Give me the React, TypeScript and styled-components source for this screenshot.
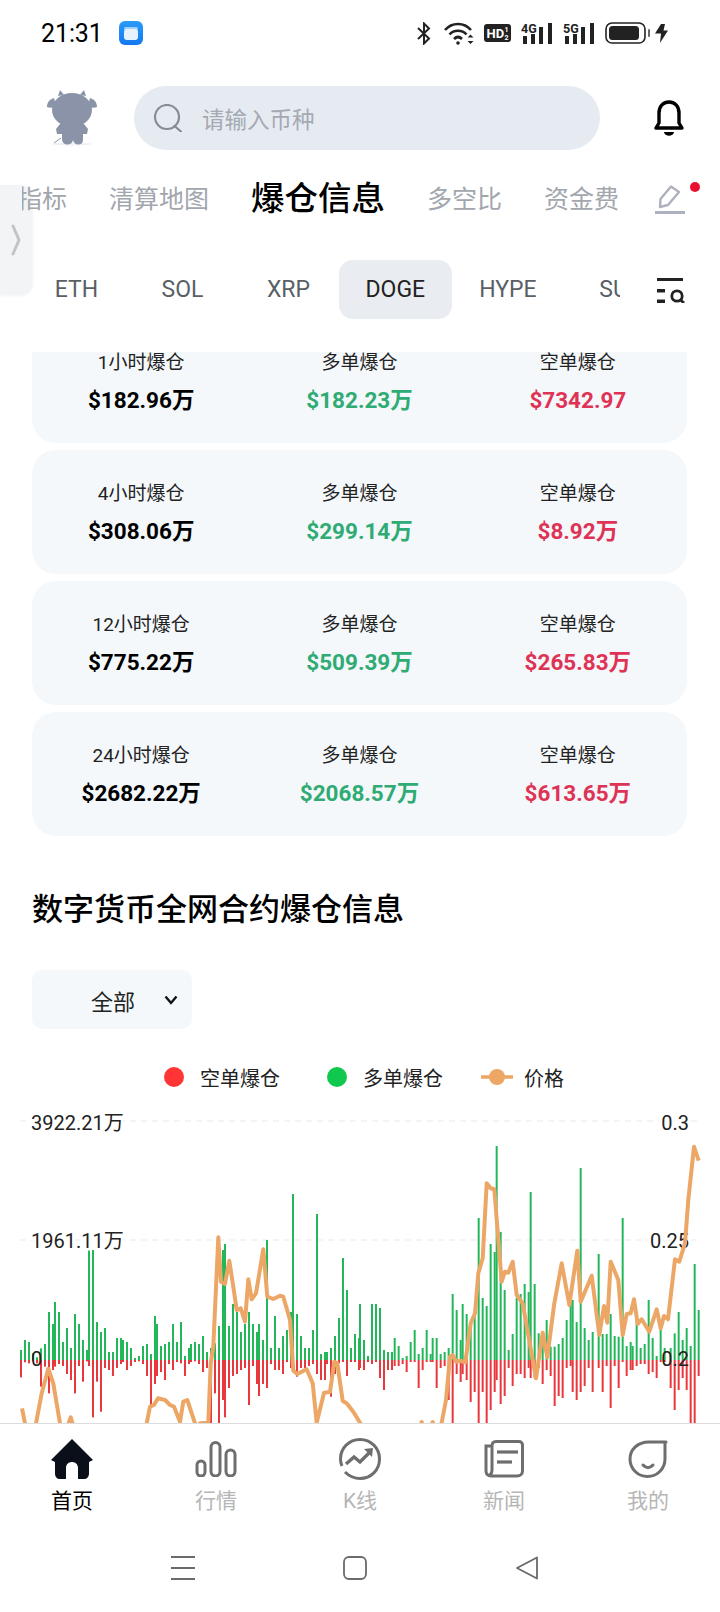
import React from "react";
import styled, { createGlobalStyle } from "styled-components";

const GlobalStyle = createGlobalStyle`
    html, body {
        margin: 0;
        padding: 0;
        background: #fff;
        font-family: Roboto, "Noto Sans CJK SC", sans-serif;
    }
`;

const Screen = styled.div`
    position: relative;
    width: 720px;
    height: 1612px;
    display: flex;
    flex-direction: column;
    overflow: hidden;
    background: #fff;
`;

const StatusBar = styled.div`
    height: 86px;
    flex-shrink: 0;
    display: flex;
    align-items: flex-start;
    padding: 21px 52px 0 41px;
    box-sizing: border-box;
`;

const Clock = styled.div`
    font-size: 25px;
    line-height: 24px;
    padding-top: 1px;
    color: #000;
    margin-right: 16px;
    letter-spacing: -0.1px;
`;

const StatusIcons = styled.div`
    margin-left: auto;
    display: flex;
    align-items: center;
    height: 24px;
    gap: 10px;
`;

const SearchRow = styled.div`
    height: 64px;
    flex-shrink: 0;
    display: flex;
    align-items: center;
    padding-left: 47px;
`;

const SearchBox = styled.div`
    width: 466px;
    height: 64px;
    margin-left: 37px;
    margin-right: 54px;
    border-radius: 32px;
    background: #e6ebf2;
    display: flex;
    align-items: center;
    padding-left: 20px;
    gap: 20px;
    box-sizing: border-box;
    font-size: 22.5px;
    color: #a4a9b2;
`;

const TopTabs = styled.div`
    height: 94px;
    flex-shrink: 0;
    display: flex;
    align-items: center;
    margin-bottom: 16px;
    padding-left: 22px;
    position: relative;
    z-index: 1;
`;

const TabClip = styled.div`
    width: 596px;
    overflow: hidden;
    display: flex;
    align-items: center;
    gap: 42px;
`;

const TabItem = styled.div<{ $active?: boolean; $first?: boolean }>`
    flex-shrink: 0;
    white-space: nowrap;
    font-size: ${(p) => (p.$active ? "33.5px" : "25px")};
    font-weight: ${(p) => (p.$active ? 500 : 400)};
    color: ${(p) => (p.$active ? "#000" : "#a2a6ad")};
    margin-left: ${(p) => (p.$first ? "-5px" : "0")};
    margin-top: ${(p) => (p.$active ? "-4px" : "0")};
`;

const EditButton = styled.div`
    position: relative;
    margin-left: 37px;
    margin-top: 5px;
    display: flex;
`;

const Dot = styled.span`
    position: absolute;
    top: -3px;
    right: -15px;
    width: 10px;
    height: 10px;
    border-radius: 50%;
    background: #e8102e;
`;

const CoinRow = styled.div`
    height: 59px;
    flex-shrink: 0;
    margin-bottom: 33px;
    display: flex;
    align-items: center;
    padding-left: 23.5px;
`;

const CoinClip = styled.div`
    width: 596.5px;
    height: 59px;
    overflow: hidden;
    display: flex;
`;

const CoinItem = styled.div<{ $active?: boolean }>`
    flex-shrink: 0;
    min-width: 106px;
    padding: 0 27px;
    margin-left: ${(p) => (p.$active ? "-3px" : "0")};
    box-sizing: border-box;
    display: flex;
    align-items: center;
    justify-content: center;
    font-size: 23px;
    border-radius: 14px;
    color: ${(p) => (p.$active ? "#222" : "#5a5f66")};
    background: ${(p) => (p.$active ? "#e9ecf0" : "transparent")};
`;

const FilterButton = styled.div`
    margin-left: 37px;
    margin-top: 2px;
    display: flex;
`;

const SideHandle = styled.div`
    position: absolute;
    left: 0;
    top: 185px;
    width: 32px;
    height: 110px;
    border-radius: 0 12px 12px 0;
    background: #f3f4f5;
    box-shadow: 1px 1px 3px rgba(0, 0, 0, 0.05);
    display: flex;
    align-items: center;
    padding-left: 11px;
    box-sizing: border-box;
`;

const Scroll = styled.div`
    flex: 1;
    min-height: 0;
    overflow: hidden;
`;

const CardList = styled.div`
    margin: -33px 33px 0 32px;
    display: flex;
    flex-direction: column;
    gap: 7px;
`;

const Card = styled.div`
    height: 124px;
    border-radius: 24px;
    background: #f4f8fb;
    display: grid;
    grid-template-columns: repeat(3, 1fr);
    padding-top: 32px;
    box-sizing: border-box;
`;

const Stat = styled.div`
    display: flex;
    flex-direction: column;
    align-items: center;
    gap: 10px;
`;

const StatLabel = styled.div`
    font-size: 19px;
    line-height: 24px;
    color: #222;
`;

const StatValue = styled.div<{ $tone?: "up" | "down" }>`
    font-size: 22.5px;
    line-height: 30px;
    font-weight: 700;
    color: ${(p) => (p.$tone === "up" ? "#2fab74" : p.$tone === "down" ? "#df3355" : "#000")};
`;

const SectionTitle = styled.h2`
    margin: 54px 0 40px 32px;
    font-size: 31px;
    line-height: 40px;
    font-weight: 500;
    color: #000;
`;

const Selector = styled.div`
    width: 160px;
    height: 59px;
    margin-left: 32px;
    border-radius: 10px;
    background: #f4f8fb;
    display: flex;
    align-items: center;
    padding-left: 59px;
    gap: 29px;
    box-sizing: border-box;
    font-size: 22px;
    color: #222;
`;

const Legend = styled.div`
    height: 24px;
    margin: 36px 0 11px 164px;
    display: flex;
    align-items: center;
    font-size: 20px;
    color: #222;
`;

const LegendDot = styled.span<{ $color: string }>`
    width: 20px;
    height: 20px;
    border-radius: 50%;
    background: ${(p) => p.$color};
    margin-right: 16px;
`;

const LegendText = styled.span`
    margin-right: 47px;
    white-space: nowrap;
`;

const LegendLine = styled.svg`
    margin-left: -9px;
    margin-right: 11px;
`;

const ChartSvg = styled.svg`
    display: block;
`;

const AxisText = styled.text<{ $halo?: boolean }>`
    font-size: 20px;
    fill: #222;
    paint-order: stroke;
    stroke: ${(p) => (p.$halo ? "#fff" : "none")};
    stroke-width: 5px;
`;

const TabBar = styled.div`
    height: 101px;
    flex-shrink: 0;
    border-top: 1px solid #dcdcdc;
    box-sizing: border-box;
    background: #fff;
    display: grid;
    grid-template-columns: repeat(5, 144px);
`;

const TabButton = styled.div<{ $active?: boolean }>`
    display: flex;
    flex-direction: column;
    align-items: center;
    padding-top: 14px;
    font-size: 21px;
    line-height: 26px;
    color: ${(p) => (p.$active ? "#000" : "#b6b6b6")};
`;

const TabIcon = styled.div`
    height: 42px;
    margin-bottom: 8px;
    display: flex;
    align-items: center;
`;

const NavBar = styled.div`
    height: 88px;
    flex-shrink: 0;
    display: flex;
    align-items: center;
    justify-content: center;
    padding-right: 10px;
    gap: 148px;
    background: #fff;
`;

// 3x coordinates read off the reference: [x, green top, red bottom], zero line at 780
const barsLeft: number[][] = [
    [63,750,832],[75,720,787],[87,726,790],[99,760,784],[111,772,790],[123,745,860],[135,732,800],[147,636,880],[159,672,810],[165,606,800],
    [177,636,792],[189,726,798],[201,684,822],[213,744,840],[225,642,880],[237,672,798],[249,720,845],[261,750,784],[267,450,798],[279,450,952],
    [291,666,845],[303,696,935],[315,684,804],[327,756,810],[339,756,828],[351,714,804],[363,714,792],[369,720,786],[381,726,810],[393,744,798],
    [405,774,786],[417,768,784],[429,738,792],[441,732,828],[453,762,915],[465,648,852],[471,672,828],[483,738,816],[495,732,840],[507,726,792],
    [519,672,810],[531,726,786],[543,666,790],[555,768,828],[567,744,792],[573,732,786],[585,726,784],[597,732,792],[609,708,816],[621,756,804],
    [633,744,990],[645,730,880],[657,678,990],[669,450,900],[675,432,952],[687,678,864],[699,612,828],[711,636,822],[723,696,810],[735,672,804],
    [747,636,915],[759,672,798],[771,696,852],[777,672,888],[789,720,852],[801,420,864],[813,744,792],[825,648,810],[837,744,810],[849,708,822],
    [861,690,786],[873,636,804],[879,282,804],[891,642,830],[903,708,804],[915,744,804],[927,744,798],[939,690,792],[951,342,822],[963,762,840],
    [975,756,840],[981,756,792],[993,744,890],[1005,708,822],[1017,654,790],[1029,474,786],[1041,570,828],[1053,744,786],[1065,702,786],[1077,714,810],
];

const barsRight: number[][] = [
    [0,612,804],[12,720,810],[24,768,786],[36,612,792],[48,612,786],[60,624,834],[72,750,870],[84,756,810],[96,756,810],[104,714,798],
    [116,738,798],[128,774,792],[140,768,816],[152,726,786],[164,690,786],[176,762,864],[188,744,810],[200,690,786],[212,762,786],[218,714,786],
    [230,714,864],[242,762,804],[254,756,798],[266,744,900],[278,582,990],[290,630,822],[302,720,846],[308,612,822],[320,642,840],[332,672,906],
    [344,640,876],[356,354,990],[368,594,876],[380,618,990],[392,432,930],[404,456,876],[410,138,840],[422,396,912],[434,570,888],[446,750,804],
    [458,702,858],[470,594,822],[482,582,822],[494,552,834],[506,576,804],[512,276,834],[524,552,834],[536,700,804],[548,696,852],[560,660,810],
    [572,740,828],[584,740,918],[596,732,888],[608,714,894],[620,660,804],[632,600,798],[638,600,876],[650,666,900],[662,204,876],[674,684,858],
    [686,720,804],[698,696,876],[716,462,804],[728,702,876],[740,702,798],[752,642,924],[764,708,798],[776,710,864],[788,354,786],[800,738,828],
    [812,726,810],[818,738,810],[830,640,798],[842,744,792],[854,732,792],[866,600,822],[878,714,816],[890,768,834],[902,690,786],[914,744,786],
    [932,744,864],[944,700,930],[956,636,870],[968,720,834],[980,684,870],[992,738,990],[1004,492,990],[1016,630,828],
];

const priceLeft: number[][] = [
    [66,925],[75,970],[90,1010],[108,970],[125,880],[145,806],[160,850],[180,970],[195,1010],[205,972],[212,952],[218,972],[240,1010],[420,1010],
    [440,970],[450,920],[462,915],[474,895],[495,900],[510,915],[522,920],[540,965],[550,905],[562,900],[585,970],[592,1000],[600,970],[625,968],
    [632,790],[640,740],[655,412],[663,545],[675,552],[688,482],[700,560],[710,630],[722,625],[735,665],[745,538],[755,598],[768,580],[790,448],
    [802,590],[820,597],[840,587],[850,590],[870,660],[880,812],[892,822],[920,808],[938,850],[950,968],[972,878],[990,876],[1003,785],[1012,790],
    [1028,903],[1040,910],[1060,935],[1080,968],[1100,1010],
];

const priceRight: number[][] = [
    [170,1010],[185,966],[195,1000],[205,1000],[218,966],[228,1000],[245,968],[258,900],[270,770],[278,765],[288,785],[300,782],[316,787],[332,670],
    [345,640],[355,520],[368,475],[380,250],[392,265],[403,268],[425,545],[435,515],[445,518],[458,485],[470,585],[488,610],[528,835],[548,698],
    [562,772],[583,610],[605,490],[628,615],[652,452],[662,605],[695,527],[718,705],[732,618],[742,668],[752,485],[775,540],[788,705],[800,642],
    [812,640],[822,598],[833,672],[845,658],[868,695],[890,628],[902,685],[912,648],[924,658],[945,478],[958,485],[975,430],[985,300],[1002,140],[1016,182],
];

const allBars = [...barsLeft, ...barsRight.map(([x, t, b]) => [x + 1080, t, b])];
const pricePoints = [...priceLeft, ...priceRight.map(([x, y]) => [x + 1080, y])]
    .map(([x, y]) => `${(x / 3).toFixed(1)},${(y / 3).toFixed(1)}`)
    .join(" ");

const stats = [
    { label: "1小时爆仓", total: "$182.96万", long: "$182.23万", short: "$7342.97" },
    { label: "4小时爆仓", total: "$308.06万", long: "$299.14万", short: "$8.92万" },
    { label: "12小时爆仓", total: "$775.22万", long: "$509.39万", short: "$265.83万" },
    { label: "24小时爆仓", total: "$2682.22万", long: "$2068.57万", short: "$613.65万" },
];

const AppDot = () => (
    <svg width="24" height="24" viewBox="0 0 24 24">
        <defs>
            <linearGradient id="appg" x1="0" y1="0" x2="0" y2="1">
                <stop offset="0" stopColor="#2a9bf8" />
                <stop offset="1" stopColor="#1478f0" />
            </linearGradient>
        </defs>
        <rect width="24" height="24" rx="6" fill="url(#appg)" />
        <rect x="5" y="6" width="14" height="3" rx="1.5" fill="#9fd0fb" />
        <rect x="5" y="8" width="14" height="11" rx="3" fill="#e6f3ff" />
    </svg>
);

const Bluetooth = () => (
    <svg width="14" height="23" viewBox="0 0 14 23" fill="none" stroke="#222" strokeWidth="2">
        <path d="M1 6 L12 16.5 L7 21.5 V1.5 L12 6.5 L1 17" />
    </svg>
);

const Wifi = () => (
    <svg width="30" height="23" viewBox="0 0 30 23" fill="none" stroke="#222" strokeWidth="2.6" style={{ marginLeft: 3 }}>
        <path d="M1 8 C8 0 20 0 27 8" />
        <path d="M5.5 12.5 C10 7.5 18 7.5 22.5 12.5" />
        <path d="M10 17 C12.5 14.5 15.5 14.5 18 17" />
        <circle cx="14" cy="21" r="1.8" fill="#222" stroke="none" />
        <path d="M23.5 15.5 L26.5 12.5 L29.5 15.5Z M23.5 19 H29.5 L26.5 22Z" fill="#222" stroke="none" />
    </svg>
);

const HdBadge = () => (
    <svg width="27" height="18" viewBox="0 0 27 18">
        <rect width="27" height="18" rx="3" fill="#222" />
        <text x="2.5" y="14" fontSize="13" fontWeight="700" fill="#fff" fontFamily="Roboto, sans-serif">HD</text>
        <text x="20.5" y="8" fontSize="7" fontWeight="700" fill="#fff" fontFamily="Roboto, sans-serif">1</text>
        <text x="20.5" y="16" fontSize="7" fontWeight="700" fill="#fff" fontFamily="Roboto, sans-serif">2</text>
    </svg>
);

const Signal = ({ label }: { label: string }) => (
    <svg width="32" height="22" viewBox="0 0 32 22" fill="#222">
        <text x="0" y="10.5" fontSize="12.5" fontWeight="700" fontFamily="Roboto, sans-serif">{label}</text>
        <rect x="2" y="14" width="4" height="8" />
        <rect x="10" y="12" width="4" height="10" />
        <rect x="18" y="5" width="4" height="17" />
        <rect x="27" y="1" width="4" height="21" />
    </svg>
);

const Battery = () => (
    <svg width="46" height="22" viewBox="0 0 46 22">
        <rect x="1" y="1" width="39" height="20" rx="6" fill="none" stroke="#222" strokeWidth="1.6" />
        <rect x="4" y="4" width="30" height="14" rx="3.5" fill="#222" />
        <rect x="43" y="7" width="2" height="8" rx="1" fill="#666" />
    </svg>
);

const Bolt = () => (
    <svg width="13" height="19" viewBox="0 0 13 19" fill="#222" style={{ marginLeft: -6 }}>
        <path d="M6 0 H10 L8.5 6.5 H13 L5 19 L6 9.5 H0Z" />
    </svg>
);

const Cow = () => (
    <svg width="50" height="56" viewBox="0 0 50 56" fill="#8a93a8">
        <ellipse cx="25" cy="54" rx="20" ry="1.5" fill="#eef0f3" />
        <path d="M11 6 L13 0 L17 5 Z M33 5 L37 0 L39 6 Z" />
        <ellipse cx="25" cy="20" rx="20" ry="17" />
        <path d="M7 8 C3 9 0 12 0 17 C3 18 7 18 9 16Z M43 8 C47 9 50 12 50 17 C47 18 43 18 41 16Z" />
        <path d="M13 34 H37 L41 39 L40 44 L36 44 V50 C36 56 27 56 26 50 C25 56 16 56 15 50 V44 L10 44 L9 39Z" />
        <path d="M7 53 L14 48" stroke="#8a93a8" strokeWidth="1" />
    </svg>
);

const SearchGlass = () => (
    <svg width="28" height="28" viewBox="0 0 28 28" fill="none" stroke="#878c94" strokeWidth="2.2">
        <circle cx="13" cy="13" r="12" />
        <path d="M20.5 22 L27 27.5" strokeLinecap="round" />
    </svg>
);

const Bell = () => (
    <svg width="30" height="37" viewBox="0 0 30 37">
        <path d="M15 2 C8.5 2 5 7 5 13 V23 L2 28 H28 L25 23 V13 C25 7 21.5 2 15 2Z" fill="none" stroke="#000" strokeWidth="3.4" strokeLinejoin="round" />
        <path d="M10 32 H20 C19.5 37 10.5 37 10 32Z" fill="#000" />
    </svg>
);

const Pencil = () => (
    <svg width="30" height="29" viewBox="0 0 30 29" fill="none" stroke="#adb1c0" strokeWidth="2.4">
        <path d="M5 22 L5.5 14 L16 1.5 L24 7 L13 20 Z" strokeLinejoin="round" />
        <rect x="0" y="26" width="30" height="3" fill="#adb1c0" stroke="none" />
    </svg>
);

const FilterSearch = () => (
    <svg width="28" height="25" viewBox="0 0 28 25" fill="#222">
        <rect x="0" y="0" width="26" height="3" />
        <rect x="0" y="11" width="8" height="3.5" />
        <rect x="0" y="21.5" width="8" height="3.5" />
        <circle cx="20" cy="18" r="5.2" fill="none" stroke="#222" strokeWidth="2.8" />
        <path d="M23 21.5 L27 25" stroke="#222" strokeWidth="2.8" />
    </svg>
);

const HandleChevron = () => (
    <svg width="10" height="32" viewBox="0 0 10 32" fill="none" stroke="#c4c4c6" strokeWidth="3" strokeLinecap="round">
        <path d="M2 2 L8 16 L2 30" />
    </svg>
);

const SelectChevron = () => (
    <svg width="14" height="10" viewBox="0 0 14 10" fill="none" stroke="#111" strokeWidth="2.4">
        <path d="M1.5 1.5 L7 8 L12.5 1.5" />
    </svg>
);

const HomeIcon = () => (
    <svg width="42" height="40" viewBox="0 0 42 40" fill="#0b0f1a">
        <path
            fillRule="evenodd"
            d="M21 0 L42 21 L38 23 V34 C38 38 36 40 33 40 H9 C6 40 4 38 4 34 V23 L0 21 Z M15 40 H27 V29 C27 21 15 21 15 29 Z"
        />
    </svg>
);

const BarsIcon = () => (
    <svg width="42" height="36" viewBox="0 0 42 36" fill="none" stroke="#6e6e6e" strokeWidth="3">
        <rect x="2" y="20" width="8" height="15" rx="4" />
        <rect x="16" y="1.5" width="9" height="33.5" rx="4.5" />
        <rect x="31" y="9" width="9" height="26" rx="4.5" />
    </svg>
);

const TrendIcon = () => (
    <svg width="42" height="42" viewBox="0 0 42 42" fill="none" stroke="#6e6e6e" strokeWidth="3">
        <path d="M6 34 C11 39 16 40.5 21 40.5 C32 40.5 40.5 32 40.5 21 C40.5 10 32 1.5 21 1.5 C10 1.5 1.5 10 1.5 21 C1.5 24 2 26 3 28" />
        <path d="M7 26 L15 19 L21 24 L31 14" strokeWidth="3.4" />
        <path d="M25 11 L34 10 L33 19Z" fill="#6e6e6e" stroke="none" />
    </svg>
);

const NewsIcon = () => (
    <svg width="40" height="38" viewBox="0 0 40 38" fill="none" stroke="#6e6e6e" strokeWidth="3">
        <path d="M8 6 H2 V31 C2 34 4 36 7 36 H33 C36 36 38.5 34 38.5 31 V5 C38.5 3 37 1.5 35 1.5 H12 C9.5 1.5 8 3 8 6 V30 C8 33 6 35 4 35.5" />
        <path d="M13 12 H34" strokeWidth="3.2" />
        <path d="M13 22 H28" strokeWidth="3.2" />
    </svg>
);

const FaceIcon = () => (
    <svg width="40" height="38" viewBox="0 0 40 38" fill="none" stroke="#6e6e6e" strokeWidth="3" strokeLinecap="round">
        <path d="M38 2 H21 C9 2 2 10 2 19 C2 29 10 36.5 19.5 36.5 C29 36.5 37 29 37 19 V3" />
        <path d="M15 25 C18 28.5 22 28.5 25 25" />
    </svg>
);

const MenuGlyph = () => (
    <svg width="24" height="24" viewBox="0 0 24 24" fill="#6a6a6a">
        <rect width="24" height="2" y="0" />
        <rect width="24" height="2" y="11" />
        <rect width="24" height="2" y="22" />
    </svg>
);

const HomeGlyph = () => (
    <svg width="24" height="24" viewBox="0 0 24 24" fill="none" stroke="#6a6a6a" strokeWidth="1.8">
        <rect x="1" y="1" width="22" height="22" rx="5" />
    </svg>
);

const BackGlyph = () => (
    <svg width="24" height="24" viewBox="0 0 24 24" fill="none" stroke="#6a6a6a" strokeWidth="1.8" strokeLinejoin="round">
        <path d="M22 1.5 V22.5 L2 12Z" />
    </svg>
);

const PriceChart = () => (
    <ChartSvg width="720" height="323" viewBox="0 0 720 323">
        <path d="M20 21 H700 M20 140 H700" stroke="#e9e9e9" strokeWidth="1.2" strokeDasharray="6 5" />
        {allBars.map(([x, top, bottom]) => (
            <g key={x}>
                <rect x={x / 3 - 1} y={top / 3} width="2" height={(780 - top) / 3} fill="#22b85a" />
                <rect x={x / 3 - 1} y={260} width="2" height={(bottom - 780) / 3} fill="#e8383d" />
            </g>
        ))}
        <AxisText x="31" y="30" $halo>3922.21万</AxisText>
        <AxisText x="31" y="148" $halo>1961.11万</AxisText>
        <AxisText x="31" y="266">0</AxisText>
        <AxisText x="689" y="30" textAnchor="end" $halo>0.3</AxisText>
        <AxisText x="689" y="148" textAnchor="end" $halo>0.25</AxisText>
        <AxisText x="689" y="266" textAnchor="end">0.2</AxisText>
        <polyline points={pricePoints} fill="none" stroke="#eca766" strokeWidth="4" strokeLinejoin="round" />
    </ChartSvg>
);

const App = () => {
    return (
        <>
            <GlobalStyle />
            <Screen>
                <StatusBar>
                    <Clock>21:31</Clock>
                    <AppDot />
                    <StatusIcons>
                        <Bluetooth />
                        <Wifi />
                        <HdBadge />
                        <Signal label="4G" />
                        <Signal label="5G" />
                        <Battery />
                        <Bolt />
                    </StatusIcons>
                </StatusBar>

                <SearchRow>
                    <Cow />
                    <SearchBox>
                        <SearchGlass />
                        请输入币种
                    </SearchBox>
                    <Bell />
                </SearchRow>

                <TopTabs>
                    <TabClip>
                        <TabItem $first>指标</TabItem>
                        <TabItem>清算地图</TabItem>
                        <TabItem $active>爆仓信息</TabItem>
                        <TabItem>多空比</TabItem>
                        <TabItem>资金费率</TabItem>
                    </TabClip>
                    <EditButton>
                        <Pencil />
                        <Dot />
                    </EditButton>
                </TopTabs>

                <CoinRow>
                    <CoinClip>
                        <CoinItem>ETH</CoinItem>
                        <CoinItem>SOL</CoinItem>
                        <CoinItem>XRP</CoinItem>
                        <CoinItem $active>DOGE</CoinItem>
                        <CoinItem>HYPE</CoinItem>
                        <CoinItem>SUI</CoinItem>
                    </CoinClip>
                    <FilterButton>
                        <FilterSearch />
                    </FilterButton>
                </CoinRow>

                <SideHandle>
                    <HandleChevron />
                </SideHandle>

                <Scroll>
                    <CardList>
                        {stats.map((row) => (
                            <Card key={row.label}>
                                <Stat>
                                    <StatLabel>{row.label}</StatLabel>
                                    <StatValue>{row.total}</StatValue>
                                </Stat>
                                <Stat>
                                    <StatLabel>多单爆仓</StatLabel>
                                    <StatValue $tone="up">{row.long}</StatValue>
                                </Stat>
                                <Stat>
                                    <StatLabel>空单爆仓</StatLabel>
                                    <StatValue $tone="down">{row.short}</StatValue>
                                </Stat>
                            </Card>
                        ))}
                    </CardList>

                    <SectionTitle>数字货币全网合约爆仓信息</SectionTitle>

                    <Selector>
                        全部
                        <SelectChevron />
                    </Selector>

                    <Legend>
                        <LegendDot $color="#ff3535" />
                        <LegendText>空单爆仓</LegendText>
                        <LegendDot $color="#10c84e" />
                        <LegendText>多单爆仓</LegendText>
                        <LegendLine width="32" height="20" viewBox="0 0 32 20">
                            <path d="M0 10 H32" stroke="#eca766" strokeWidth="3.6" />
                            <circle cx="16" cy="10" r="8" fill="#eca766" />
                        </LegendLine>
                        <span>价格</span>
                    </Legend>

                    <PriceChart />
                </Scroll>

                <TabBar>
                    <TabButton $active>
                        <TabIcon><HomeIcon /></TabIcon>
                        首页
                    </TabButton>
                    <TabButton>
                        <TabIcon><BarsIcon /></TabIcon>
                        行情
                    </TabButton>
                    <TabButton>
                        <TabIcon><TrendIcon /></TabIcon>
                        K线
                    </TabButton>
                    <TabButton>
                        <TabIcon><NewsIcon /></TabIcon>
                        新闻
                    </TabButton>
                    <TabButton>
                        <TabIcon><FaceIcon /></TabIcon>
                        我的
                    </TabButton>
                </TabBar>

                <NavBar>
                    <MenuGlyph />
                    <HomeGlyph />
                    <BackGlyph />
                </NavBar>
            </Screen>
        </>
    );
};

export default App;
